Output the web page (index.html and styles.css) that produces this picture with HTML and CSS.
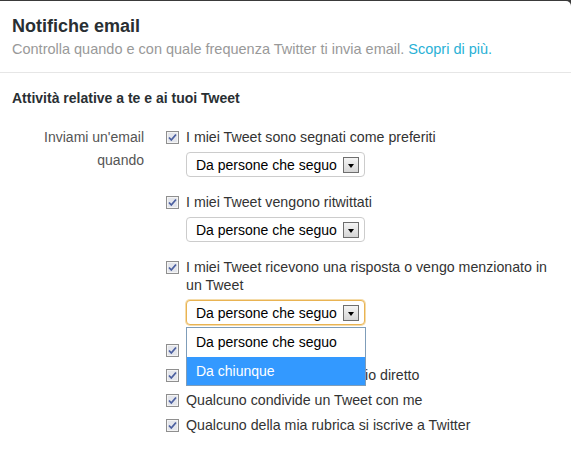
FILE: index.html
```
<!DOCTYPE html>
<html lang="it">
<head>
<meta charset="utf-8">
<title>Notifiche email</title>
<link rel="stylesheet" href="styles.css">
</head>
<body>
<div class="card">
  <header class="head">
    <h1 class="title">Notifiche email</h1>
    <p class="sub">Controlla quando e con quale frequenza Twitter ti invia email. <a class="link" href="#">Scopri di più.</a></p>
  </header>
  <section class="sec">
    <h2 class="sec-title">Attività relative a te e ai tuoi Tweet</h2>
    <div class="row">
      <div class="label">Inviami un'email quando</div>
      <div class="opts">
        <div class="item">
          <div class="chk"><svg class="box" width="13" height="13" viewBox="0 0 13 13"><rect x="0.5" y="0.5" width="12" height="12" fill="#fff" stroke="#8f8f8f"/><rect x="1.5" y="1.5" width="10" height="10" fill="#e4e6ec" stroke="#f4f4f4"/><path d="M3 6.5 L5.3 9 L10 3.5" fill="none" stroke="#4b5fa0" stroke-width="1.8"/></svg><span class="txt">I miei Tweet sono segnati come preferiti</span></div>
          <div class="select"><span class="sel-text">Da persone che seguo</span><span class="arrow"></span></div>
        </div>
        <div class="item">
          <div class="chk"><svg class="box" width="13" height="13" viewBox="0 0 13 13"><rect x="0.5" y="0.5" width="12" height="12" fill="#fff" stroke="#8f8f8f"/><rect x="1.5" y="1.5" width="10" height="10" fill="#e4e6ec" stroke="#f4f4f4"/><path d="M3 6.5 L5.3 9 L10 3.5" fill="none" stroke="#4b5fa0" stroke-width="1.8"/></svg><span class="txt">I miei Tweet vengono ritwittati</span></div>
          <div class="select"><span class="sel-text">Da persone che seguo</span><span class="arrow"></span></div>
        </div>
        <div class="item">
          <div class="chk"><svg class="box" width="13" height="13" viewBox="0 0 13 13"><rect x="0.5" y="0.5" width="12" height="12" fill="#fff" stroke="#8f8f8f"/><rect x="1.5" y="1.5" width="10" height="10" fill="#e4e6ec" stroke="#f4f4f4"/><path d="M3 6.5 L5.3 9 L10 3.5" fill="none" stroke="#4b5fa0" stroke-width="1.8"/></svg><span class="txt">I miei Tweet ricevono una risposta o vengo menzionato in un Tweet</span></div>
          <div class="select-wrap">
            <div class="select focus"><span class="sel-text">Da persone che seguo</span><span class="arrow"></span></div>
            <ul class="menu">
              <li class="opt">Da persone che seguo</li>
              <li class="opt active">Da chiunque</li>
            </ul>
          </div>
        </div>
        <div class="item simple">
          <div class="chk"><svg class="box" width="13" height="13" viewBox="0 0 13 13"><rect x="0.5" y="0.5" width="12" height="12" fill="#fff" stroke="#8f8f8f"/><rect x="1.5" y="1.5" width="10" height="10" fill="#e4e6ec" stroke="#f4f4f4"/><path d="M3 6.5 L5.3 9 L10 3.5" fill="none" stroke="#4b5fa0" stroke-width="1.8"/></svg><span class="txt">Qualcuno mi segue</span></div>
        </div>
        <div class="item simple">
          <div class="chk"><svg class="box" width="13" height="13" viewBox="0 0 13 13"><rect x="0.5" y="0.5" width="12" height="12" fill="#fff" stroke="#8f8f8f"/><rect x="1.5" y="1.5" width="10" height="10" fill="#e4e6ec" stroke="#f4f4f4"/><path d="M3 6.5 L5.3 9 L10 3.5" fill="none" stroke="#4b5fa0" stroke-width="1.8"/></svg><span class="txt">Mi viene inviato un messaggio diretto</span></div>
        </div>
        <div class="item simple">
          <div class="chk"><svg class="box" width="13" height="13" viewBox="0 0 13 13"><rect x="0.5" y="0.5" width="12" height="12" fill="#fff" stroke="#8f8f8f"/><rect x="1.5" y="1.5" width="10" height="10" fill="#e4e6ec" stroke="#f4f4f4"/><path d="M3 6.5 L5.3 9 L10 3.5" fill="none" stroke="#4b5fa0" stroke-width="1.8"/></svg><span class="txt">Qualcuno condivide un Tweet con me</span></div>
        </div>
        <div class="item simple">
          <div class="chk"><svg class="box" width="13" height="13" viewBox="0 0 13 13"><rect x="0.5" y="0.5" width="12" height="12" fill="#fff" stroke="#8f8f8f"/><rect x="1.5" y="1.5" width="10" height="10" fill="#e4e6ec" stroke="#f4f4f4"/><path d="M3 6.5 L5.3 9 L10 3.5" fill="none" stroke="#4b5fa0" stroke-width="1.8"/></svg><span class="txt">Qualcuno della mia rubrica si iscrive a Twitter</span></div>
        </div>
      </div>
    </div>
  </section>
</div>
</body>
</html>
```
FILE: styles.css
```
* { box-sizing: border-box; }
html, body { margin: 0; padding: 0; }
body {
  background: #3a3a3a;
  font-family: "Liberation Sans", Arial, sans-serif;
  color: #333;
  font-size: 14px;
  overflow: hidden;
}
.card {
  margin-top: 1px;
  background: #fff;
  border-top-right-radius: 5px;
  min-height: calc(100vh - 1px);
}
.head {
  padding: 13px 12px 14px;
  border-bottom: 1px solid #e6e6e6;
}
.title {
  margin: 0;
  font-size: 18px;
  line-height: 24px;
  font-weight: bold;
  color: #292f33;
}
.sub {
  margin: 2px 0 0;
  font-size: 14.5px;
  line-height: 18px;
  color: #999;
}
.link { color: #29b1d6; text-decoration: none; }
.sec { padding: 16px 12px 0; }
.sec-title {
  margin: 0;
  font-size: 14px;
  line-height: 18px;
  font-weight: bold;
  color: #292f33;
}
.row {
  display: flex;
  gap: 22px;
  margin-top: 21px;
}
.label {
  width: 132px;
  flex: none;
  text-align: right;
  line-height: 23px;
  margin-top: -2px;
  color: #555;
}
.opts { width: 392px; }
.item { margin-bottom: 16px; }
.item.simple { margin-bottom: 7px; }
.chk {
  display: flex;
  align-items: flex-start;
  gap: 7px;
  line-height: 18px;
}
.box { flex: none; margin-top: 3px; }
.txt { color: #333; font-size: 14.2px; }
.select-wrap { position: relative; padding-top: 6px; }
.select-wrap .select { margin-top: 0; }
.select {
  margin: 6px 0 0 20px;
  width: 179px;
  height: 25px;
  border: 1px solid #ccc;
  border-radius: 4px;
  display: flex;
  align-items: center;
  justify-content: space-between;
  padding: 0 5px 0 9px;
  color: #000;
  background: #fff;
}
.select.focus {
  border-color: #e9b352;
  box-shadow: 0 0 0 1px #f5dcaa;
}
.arrow {
  width: 16px;
  height: 16px;
  border: 1px solid #6e6e6e;
  background: linear-gradient(#f4f4f4, #d6d6d6);
  position: relative;
}
.arrow::after {
  content: "";
  position: absolute;
  left: 4px;
  top: 6px;
  border-left: 3.5px solid transparent;
  border-right: 3.5px solid transparent;
  border-top: 4px solid #000;
}
.menu {
  position: absolute;
  left: 20px;
  top: 33px;
  width: 180px;
  margin: 0;
  padding: 0;
  list-style: none;
  background: #fff;
  border: 1px solid #7f9db9;
  z-index: 2;
}
.opt {
  height: 28.5px;
  line-height: 28px;
  padding-left: 9px;
  color: #000;
}
.opt.active { background: #3399ff; color: #fff; }
```
